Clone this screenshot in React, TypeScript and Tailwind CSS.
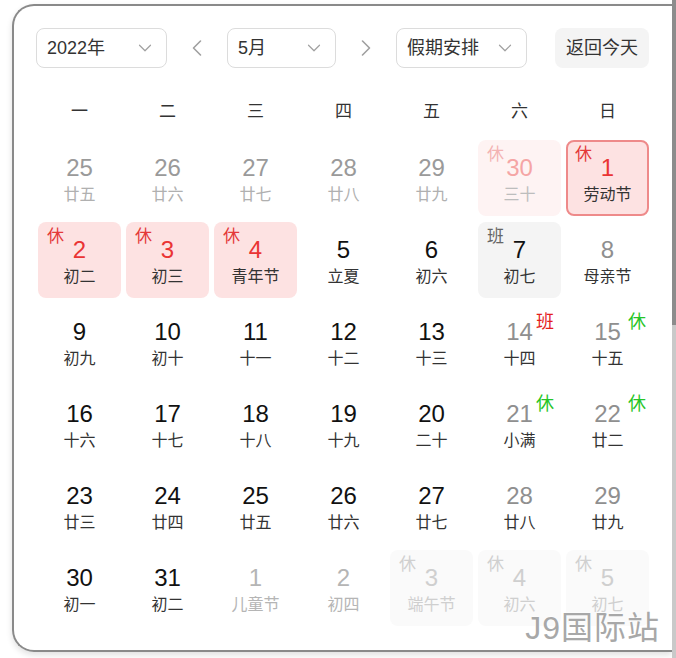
import { ChevronDown, ChevronLeft, ChevronRight } from "lucide-react";

type Kind = "prev" | "prevHol" | "sel" | "hol" | "cur" | "work" | "wkd" | "next" | "nextHol";

interface Day {
  d: string;
  l: string;
  k: Kind;
  mark?: { t: string; green?: boolean };
}

const weeks: Day[][] = [
  [
    { d: "25", l: "廿五", k: "prev" },
    { d: "26", l: "廿六", k: "prev" },
    { d: "27", l: "廿七", k: "prev" },
    { d: "28", l: "廿八", k: "prev" },
    { d: "29", l: "廿九", k: "prev" },
    { d: "30", l: "三十", k: "prevHol" },
    { d: "1", l: "劳动节", k: "sel" },
  ],
  [
    { d: "2", l: "初二", k: "hol" },
    { d: "3", l: "初三", k: "hol" },
    { d: "4", l: "青年节", k: "hol" },
    { d: "5", l: "立夏", k: "cur" },
    { d: "6", l: "初六", k: "cur" },
    { d: "7", l: "初七", k: "work" },
    { d: "8", l: "母亲节", k: "wkd" },
  ],
  [
    { d: "9", l: "初九", k: "cur" },
    { d: "10", l: "初十", k: "cur" },
    { d: "11", l: "十一", k: "cur" },
    { d: "12", l: "十二", k: "cur" },
    { d: "13", l: "十三", k: "cur" },
    { d: "14", l: "十四", k: "wkd", mark: { t: "班" } },
    { d: "15", l: "十五", k: "wkd", mark: { t: "休", green: true } },
  ],
  [
    { d: "16", l: "十六", k: "cur" },
    { d: "17", l: "十七", k: "cur" },
    { d: "18", l: "十八", k: "cur" },
    { d: "19", l: "十九", k: "cur" },
    { d: "20", l: "二十", k: "cur" },
    { d: "21", l: "小满", k: "wkd", mark: { t: "休", green: true } },
    { d: "22", l: "廿二", k: "wkd", mark: { t: "休", green: true } },
  ],
  [
    { d: "23", l: "廿三", k: "cur" },
    { d: "24", l: "廿四", k: "cur" },
    { d: "25", l: "廿五", k: "cur" },
    { d: "26", l: "廿六", k: "cur" },
    { d: "27", l: "廿七", k: "cur" },
    { d: "28", l: "廿八", k: "wkd" },
    { d: "29", l: "廿九", k: "wkd" },
  ],
  [
    { d: "30", l: "初一", k: "cur" },
    { d: "31", l: "初二", k: "cur" },
    { d: "1", l: "儿童节", k: "next" },
    { d: "2", l: "初四", k: "next" },
    { d: "3", l: "端午节", k: "nextHol" },
    { d: "4", l: "初六", k: "nextHol" },
    { d: "5", l: "初七", k: "nextHol" },
  ],
];

const styles: Record<Kind, { box: string; num: string; lunar: string; corner?: string; cornerText?: string }> = {
  prev: { box: "", num: "text-[#9a9a9a]", lunar: "text-[#b0b0b0]" },
  prevHol: { box: "bg-[#fef3f3]", num: "text-[#f5a5a5]", lunar: "text-[#bdbdbd]", corner: "text-[#f3b3b3]", cornerText: "休" },
  sel: { box: "bg-[#fde2e2] border-2 border-[#ee8a8a]", num: "text-[#ea3434]", lunar: "text-[#333]", corner: "text-[#e43a3a]", cornerText: "休" },
  hol: { box: "bg-[#fde2e2]", num: "text-[#ea3434]", lunar: "text-[#333]", corner: "text-[#e43a3a]", cornerText: "休" },
  cur: { box: "", num: "text-[#111]", lunar: "text-[#333]" },
  work: { box: "bg-[#f4f4f4]", num: "text-[#111]", lunar: "text-[#333]", corner: "text-[#666]", cornerText: "班" },
  wkd: { box: "", num: "text-[#8f8f8f]", lunar: "text-[#333]" },
  next: { box: "", num: "text-[#b5b5b5]", lunar: "text-[#b5b5b5]" },
  nextHol: { box: "bg-[#fafafa]", num: "text-[#cfcfcf]", lunar: "text-[#cfcfcf]", corner: "text-[#d0d0d0]", cornerText: "休" },
};

function DayCell({ day, col }: { day: Day; col: number }) {
  const s = styles[day.k];
  const bordered = day.k === "sel";
  return (
    <div className={`relative h-[76px] rounded-[8px] flex flex-col items-center ${s.box} ${bordered ? "pt-[13px]" : "pt-[15px]"}`}>
      {s.cornerText && (
        <span className={`absolute text-[17px] leading-[20px] ${s.corner} ${bordered ? "left-[7px] top-[3px]" : "left-[9px] top-[5px]"}`}>
          {s.cornerText}
        </span>
      )}
      {day.mark && (
        <span
          className={`absolute top-[7px] text-[18px] leading-[22px] ${col === 5 ? "right-[7px]" : "right-[3px]"} ${
            day.mark.green ? "text-[#27c527]" : "text-[#e41e1e]"
          }`}
        >
          {day.mark.t}
        </span>
      )}
      <span className={`text-[24px] leading-[26px] ${s.num}`}>{day.d}</span>
      <span className={`mt-[4px] text-[16px] leading-[20px] ${s.lunar}`}>{day.l}</span>
    </div>
  );
}

function Select({ label, width }: { label: string; width: string }) {
  return (
    <div className={`flex h-[40px] ${width} items-center justify-between rounded-[8px] border border-[#dcdcdc] pl-[10px] pr-[10px]`}>
      <span className="text-[18px] text-[#333]">{label}</span>
      <ChevronDown size={22} strokeWidth={1.3} className="text-[#a0a0a0]" />
    </div>
  );
}

export default function App() {
  return (
    <div
      className="relative flex h-[658px] w-[676px] overflow-hidden bg-white"
      style={{ fontFamily: '"Liberation Sans", "Noto Sans CJK SC", sans-serif' }}
    >
      <div className="w-[672px] pl-[12px] pt-[4px]">
        <div className="h-[648px] rounded-l-[22px] border-2 border-r-0 border-[#8a8a8a] pl-[24px] pr-[9px] pt-[22px] shadow-[0_3px_6px_rgba(0,0,0,0.12)]">
          <div className="-ml-[2px] flex items-center">
            <Select label="2022年" width="w-[131px]" />
            <div className="flex w-[60px] justify-center">
              <ChevronLeft size={28} strokeWidth={1.4} className="text-[#a0a0a0]" />
            </div>
            <Select label="5月" width="w-[109px]" />
            <div className="flex w-[60px] justify-center">
              <ChevronRight size={28} strokeWidth={1.4} className="text-[#a0a0a0]" />
            </div>
            <Select label="假期安排" width="w-[131px]" />
            <button className="ml-[28px] flex h-[40px] w-[94px] items-center justify-center rounded-[8px] bg-[#f4f4f4] text-[18px] text-[#333]">
              返回今天
            </button>
          </div>

          <div className="mt-[28px] grid h-[32px] w-[611px] grid-cols-7 gap-x-[5px]">
            {["一", "二", "三", "四", "五", "六", "日"].map((w) => (
              <div key={w} className="flex items-center justify-center text-[17px] text-[#333]">
                {w}
              </div>
            ))}
          </div>

          <div className="mt-[12px] grid w-[611px] grid-cols-7 gap-x-[5px] gap-y-[6px]">
            {weeks.map((week, r) =>
              week.map((day, c) => <DayCell key={`${r}-${c}`} day={day} col={c} />)
            )}
          </div>
        </div>
      </div>

      <div className="flex w-[4px] flex-col">
        <div className="h-[325px] bg-[#8c8c8c]" />
        <div className="flex-1 bg-[#c9c9c9]" />
      </div>

      <div
        className="pointer-events-none absolute bottom-[10px] right-[16px] text-[32px] leading-[40px] tracking-[1px] text-[#a8a8a8]"
        style={{ textShadow: "0 0 2px #fff, 0 0 2px #fff" }}
      >
        J9国际站
      </div>
    </div>
  );
}
